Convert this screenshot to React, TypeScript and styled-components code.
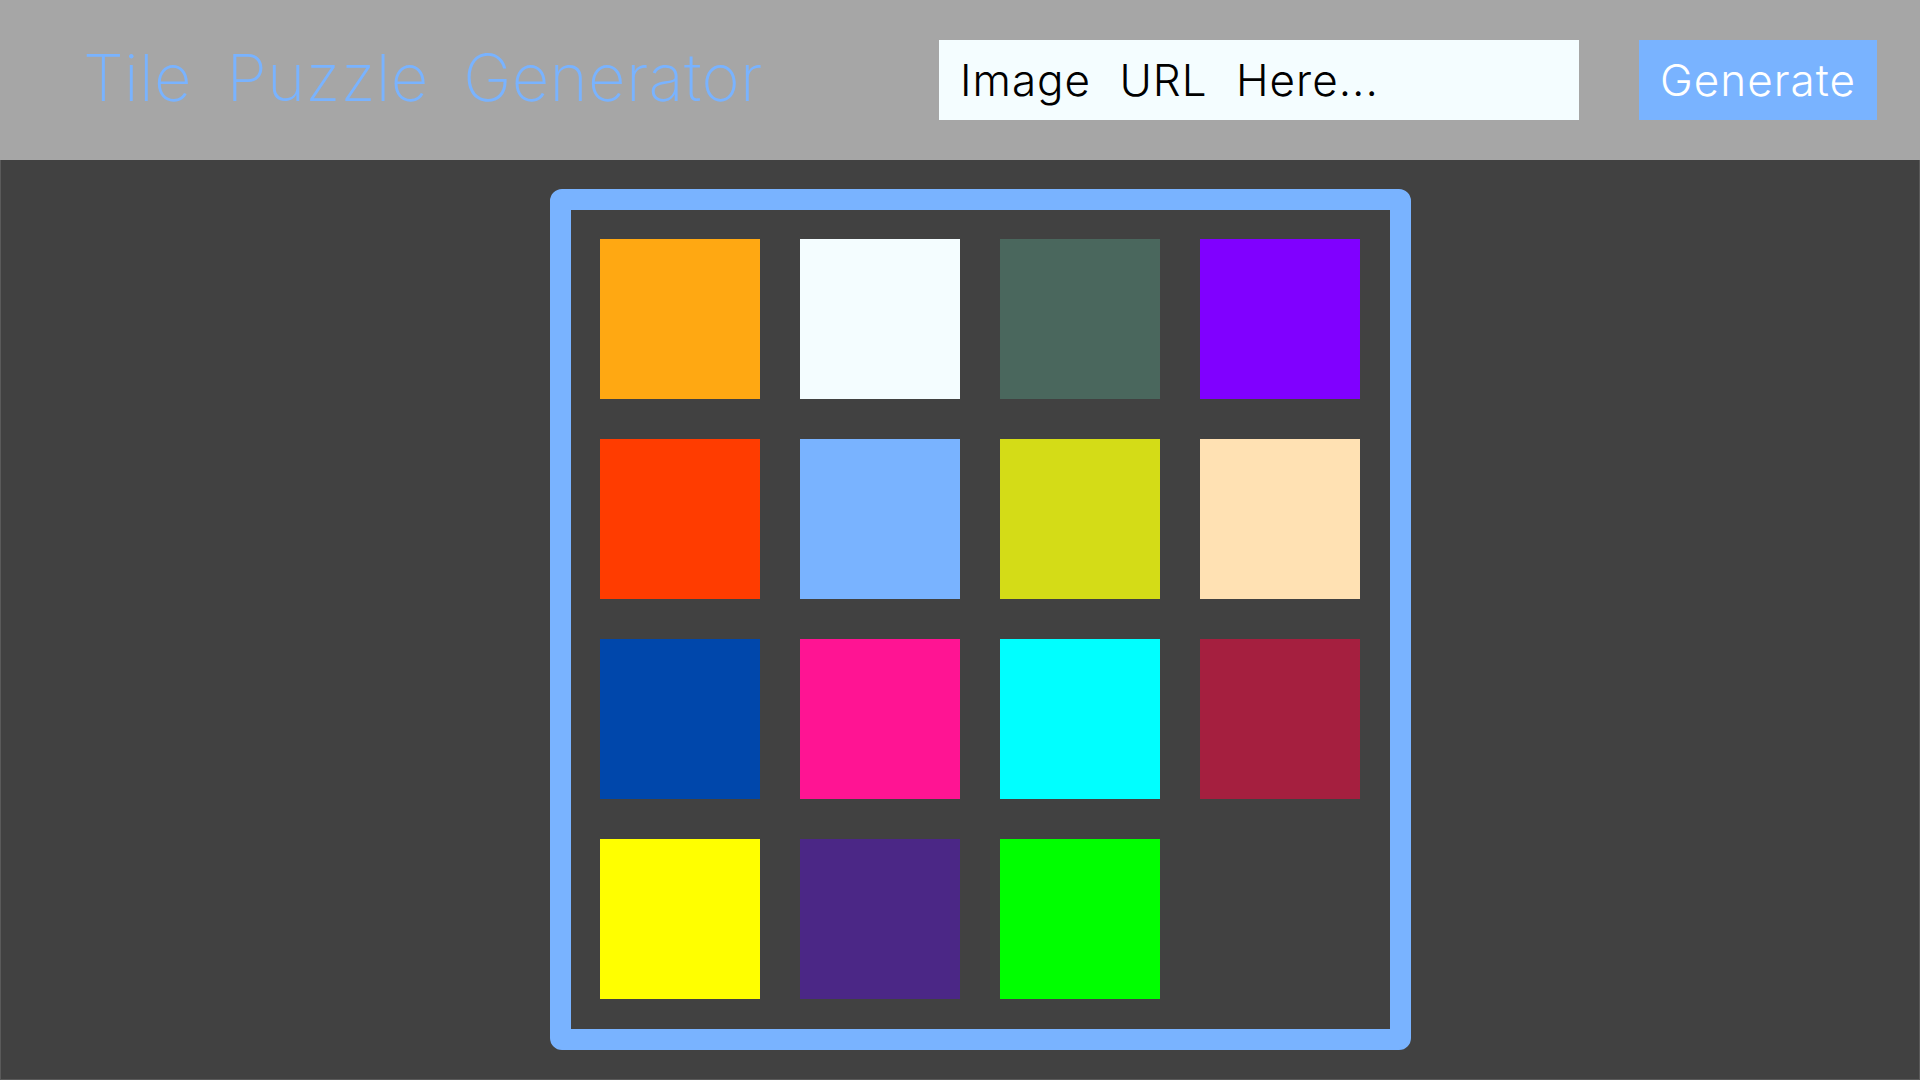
import styled, { createGlobalStyle } from "styled-components";

const GlobalStyle = createGlobalStyle`
  html, body {
    margin: 0;
    padding: 0;
    background: #414141;
    font-family: Inter, Roboto, "Liberation Sans", sans-serif;
  }
  * {
    box-sizing: border-box;
  }
`;

const TILES = [
  "#ffa812",
  "#f4fdff",
  "#4a675d",
  "#8000ff",
  "#ff3c00",
  "#79b3ff",
  "#d4dc17",
  "#ffe1b3",
  "#0047ab",
  "#ff1493",
  "#00ffff",
  "#a51f3f",
  "#ffff00",
  "#4b2786",
  "#00ff00",
  null,
];

const Page = styled.div`
  display: flex;
  flex-direction: column;
  height: 1080px;
`;

const Header = styled.header`
  display: flex;
  align-items: center;
  height: 160px;
  padding: 0 43px 0 83px;
  background: #a6a6a6;
`;

const Title = styled.h1`
  flex: 1;
  margin: 0 0 6px;
  font-size: 65px;
  font-weight: 200;
  color: #79b3ff;
  word-spacing: 16px;
  letter-spacing: 0.4px;
  white-space: nowrap;
`;

const UrlInput = styled.input`
  width: 640px;
  height: 80px;
  padding: 0 21px;
  border: none;
  outline: none;
  background: #f4fdff;
  font-family: inherit;
  font-size: 44px;
  font-weight: 300;
  color: #000;
  word-spacing: 15px;
  letter-spacing: 1px;

  &::placeholder {
    color: #000;
  }
`;

const GenerateButton = styled.button`
  width: 238px;
  height: 80px;
  margin-left: 60px;
  padding: 0;
  border: none;
  background: #79b3ff;
  font-family: inherit;
  font-size: 44px;
  font-weight: 300;
  letter-spacing: 1px;
  color: #fff;
  cursor: pointer;
`;

const Main = styled.main`
  flex: 1;
  display: flex;
  justify-content: center;
  align-items: flex-start;
  padding: 29px 0 0 41px;
  border: 1px solid #5a5a5a;
  border-top: none;
`;

const Board = styled.div`
  display: grid;
  grid-template-columns: repeat(4, 160px);
  grid-auto-rows: 160px;
  gap: 40px;
  padding: 29px 30px 30px 29px;
  border: 21px solid #79b3ff;
  border-radius: 12px;
`;

const Tile = styled.div<{ $color: string | null }>`
  background: ${(p) => p.$color ?? "transparent"};
`;

export default function App() {
  return (
    <Page>
      <GlobalStyle />
      <Header>
        <Title>Tile Puzzle Generator</Title>
        <UrlInput type="text" placeholder="Image URL Here..." />
        <GenerateButton>Generate</GenerateButton>
      </Header>
      <Main>
        <Board>
          {TILES.map((c, i) => (
            <Tile key={i} $color={c} />
          ))}
        </Board>
      </Main>
    </Page>
  );
}
